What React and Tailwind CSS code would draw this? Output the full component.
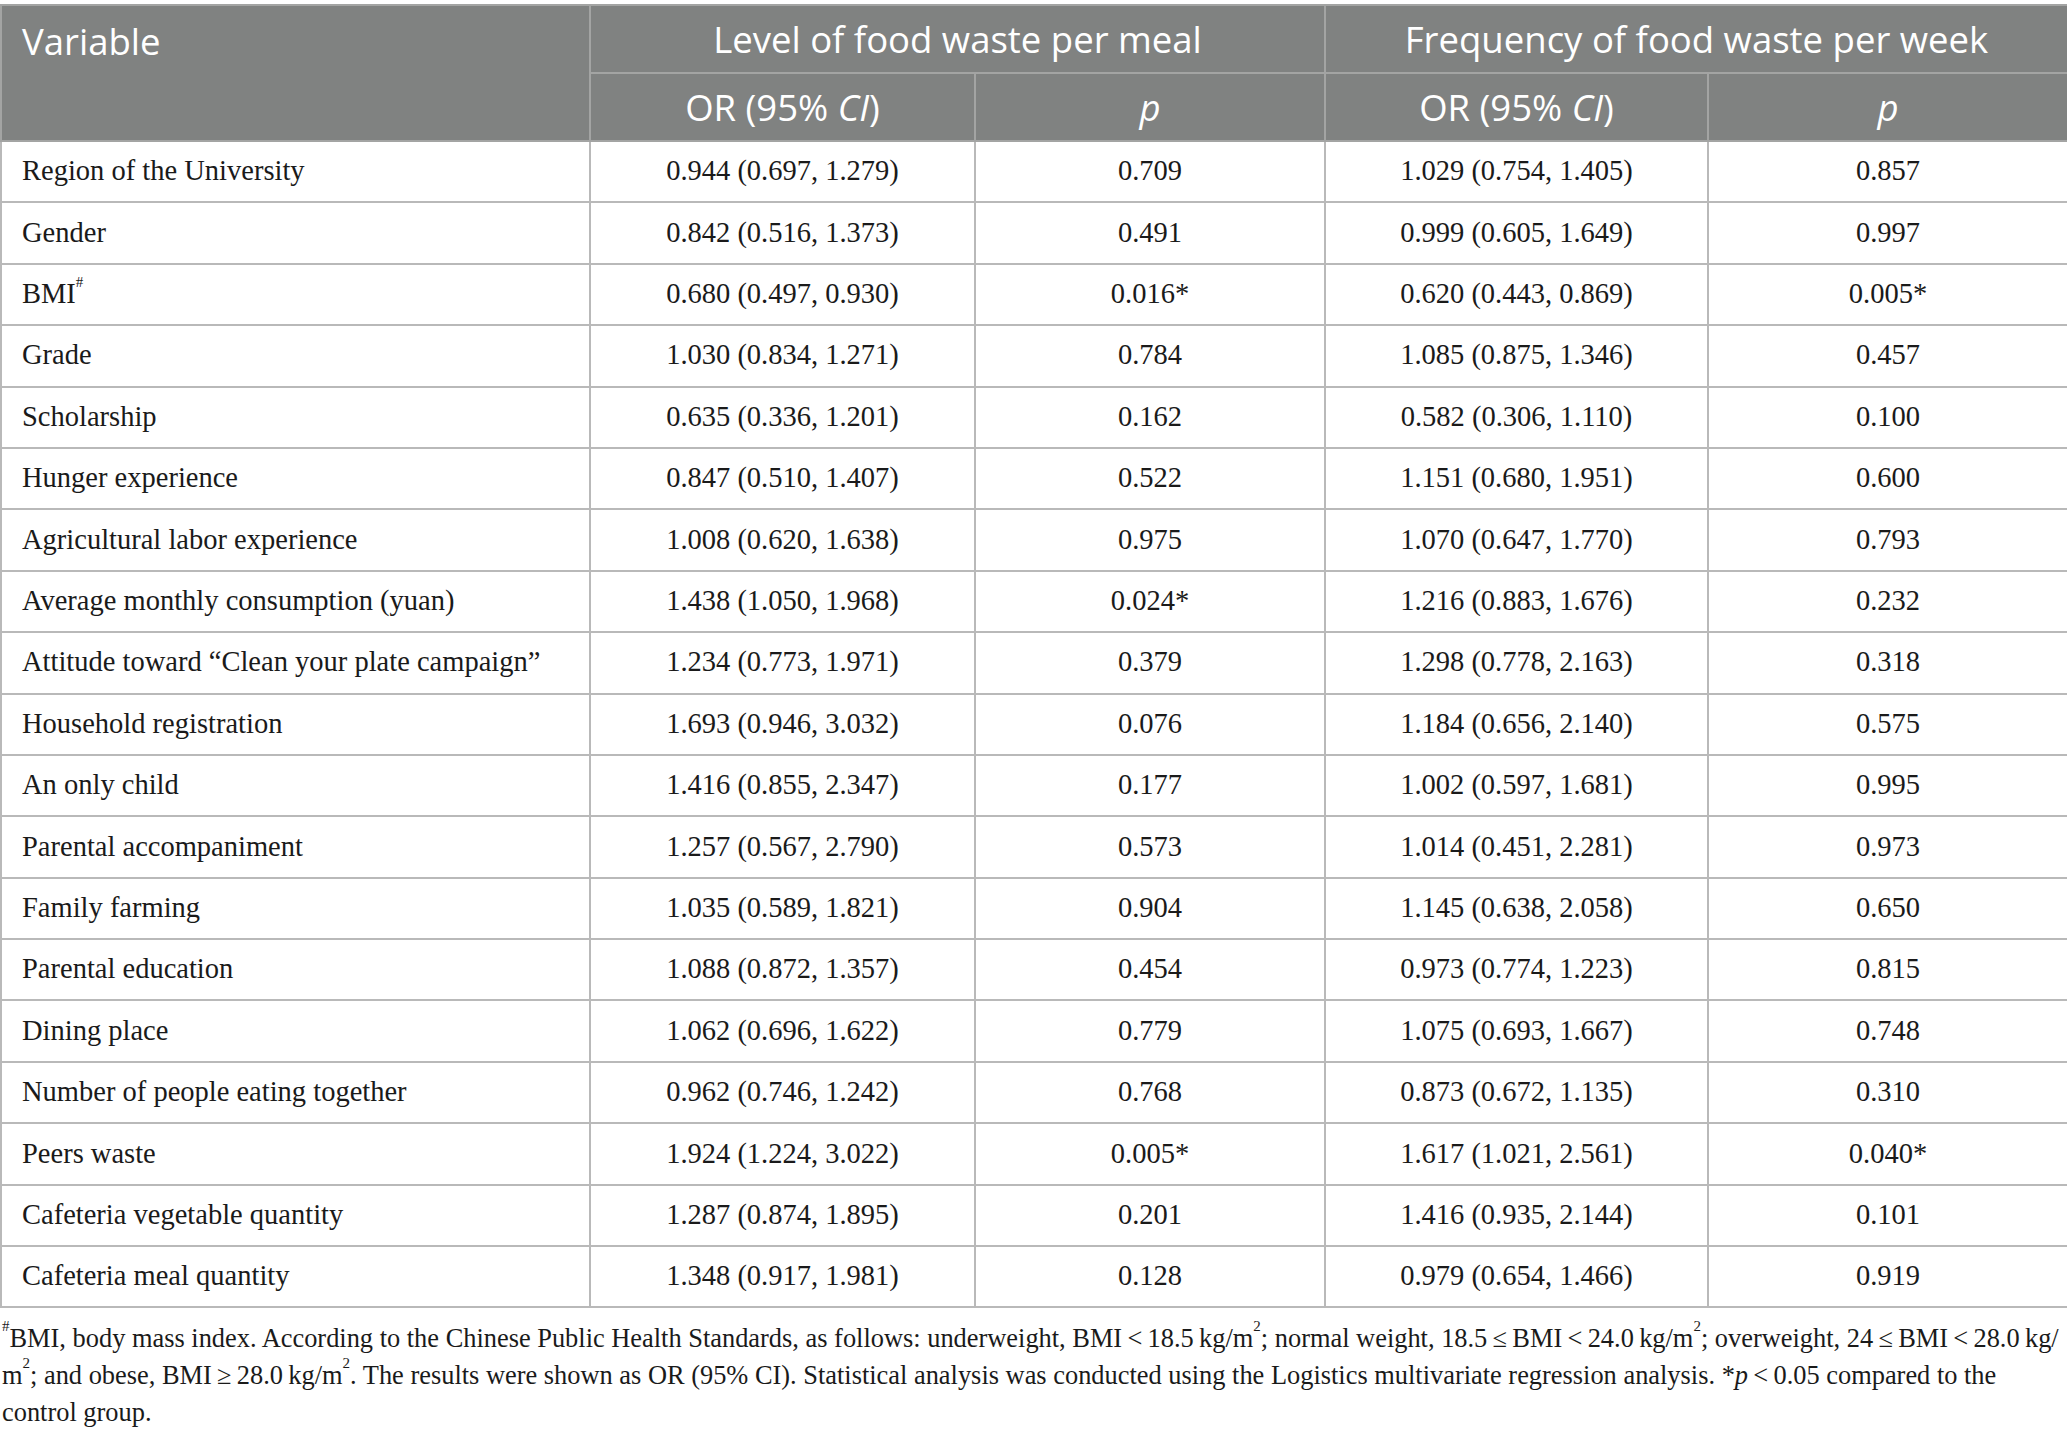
import React from 'react';

const rows = [
  ['Region of the University', '0.944 (0.697, 1.279)', '0.709', '1.029 (0.754, 1.405)', '0.857'],
  ['Gender', '0.842 (0.516, 1.373)', '0.491', '0.999 (0.605, 1.649)', '0.997'],
  ['BMI#', '0.680 (0.497, 0.930)', '0.016*', '0.620 (0.443, 0.869)', '0.005*'],
  ['Grade', '1.030 (0.834, 1.271)', '0.784', '1.085 (0.875, 1.346)', '0.457'],
  ['Scholarship', '0.635 (0.336, 1.201)', '0.162', '0.582 (0.306, 1.110)', '0.100'],
  ['Hunger experience', '0.847 (0.510, 1.407)', '0.522', '1.151 (0.680, 1.951)', '0.600'],
  ['Agricultural labor experience', '1.008 (0.620, 1.638)', '0.975', '1.070 (0.647, 1.770)', '0.793'],
  ['Average monthly consumption (yuan)', '1.438 (1.050, 1.968)', '0.024*', '1.216 (0.883, 1.676)', '0.232'],
  ['Attitude toward \u201cClean your plate campaign\u201d', '1.234 (0.773, 1.971)', '0.379', '1.298 (0.778, 2.163)', '0.318'],
  ['Household registration', '1.693 (0.946, 3.032)', '0.076', '1.184 (0.656, 2.140)', '0.575'],
  ['An only child', '1.416 (0.855, 2.347)', '0.177', '1.002 (0.597, 1.681)', '0.995'],
  ['Parental accompaniment', '1.257 (0.567, 2.790)', '0.573', '1.014 (0.451, 2.281)', '0.973'],
  ['Family farming', '1.035 (0.589, 1.821)', '0.904', '1.145 (0.638, 2.058)', '0.650'],
  ['Parental education', '1.088 (0.872, 1.357)', '0.454', '0.973 (0.774, 1.223)', '0.815'],
  ['Dining place', '1.062 (0.696, 1.622)', '0.779', '1.075 (0.693, 1.667)', '0.748'],
  ['Number of people eating together', '0.962 (0.746, 1.242)', '0.768', '0.873 (0.672, 1.135)', '0.310'],
  ['Peers waste', '1.924 (1.224, 3.022)', '0.005*', '1.617 (1.021, 2.561)', '0.040*'],
  ['Cafeteria vegetable quantity', '1.287 (0.874, 1.895)', '0.201', '1.416 (0.935, 2.144)', '0.101'],
  ['Cafeteria meal quantity', '1.348 (0.917, 1.981)', '0.128', '0.979 (0.654, 1.466)', '0.919'],
];

function Sup({ children }) {
  return <sup className="text-[15px] leading-none align-[9px]">{children}</sup>;
}

function Label({ text }) {
  // the BMI row carries a superscript marker
  if (text.endsWith('#')) {
    return (
      <>
        {text.slice(0, -1)}
        <Sup>#</Sup>
      </>
    );
  }
  return text;
}

export default function App() {
  const head = "font-['Open_Sans',sans-serif] text-[36.5px] font-normal text-white border-2 border-[#a3a4a3]";
  const cell = 'border-2 border-[#b9b9b9] h-[61.4px]';

  return (
    <div className="w-[2067px] bg-white pt-[4px] font-['Liberation_Serif',serif] text-[#1a1a1a]">
      <table className="w-full table-fixed border-collapse">
        <colgroup>
          <col className="w-[589px]" />
          <col className="w-[385px]" />
          <col className="w-[350px]" />
          <col className="w-[383px]" />
          <col className="w-[360px]" />
        </colgroup>
        <thead className="bg-[#808281]">
          <tr className="h-[68px]">
            <th rowSpan={2} className={`${head} text-left align-top pl-[20px] pt-[8px]`}>
              Variable
            </th>
            <th colSpan={2} className={`${head} text-center`}>
              Level of food waste per meal
            </th>
            <th colSpan={2} className={`${head} text-center`}>
              Frequency of food waste per week
            </th>
          </tr>
          <tr className="h-[68px]">
            <th className={`${head} text-center`}>
              OR (95% <i>CI</i>)
            </th>
            <th className={`${head} text-center`}>
              <i>p</i>
            </th>
            <th className={`${head} text-center`}>
              OR (95% <i>CI</i>)
            </th>
            <th className={`${head} text-center`}>
              <i>p</i>
            </th>
          </tr>
        </thead>
        <tbody className="text-[28.5px]">
          {rows.map((r) => (
            <tr key={r[0]}>
              <td className={`${cell} text-left pl-[20px]`}>
                <Label text={r[0]} />
              </td>
              <td className={`${cell} text-center`}>{r[1]}</td>
              <td className={`${cell} text-center`}>{r[2]}</td>
              <td className={`${cell} text-center`}>{r[3]}</td>
              <td className={`${cell} text-center`}>{r[4]}</td>
            </tr>
          ))}
        </tbody>
      </table>

      <p className="mt-[12px] px-[2px] text-[26.4px] leading-[37px] whitespace-nowrap">
        <Sup>#</Sup>BMI, body mass index. According to the Chinese Public Health Standards, as follows: underweight,
        BMI&#8201;&lt;&#8201;18.5&#8201;kg/m<Sup>2</Sup>; normal weight, 18.5&#8201;≤&#8201;BMI&#8201;&lt;&#8201;24.0&#8201;kg/m
        <Sup>2</Sup>; overweight, 24&#8201;≤&#8201;BMI&#8201;&lt;&#8201;28.0&#8201;kg/
        <br />
        m<Sup>2</Sup>; and obese, BMI&#8201;≥&#8201;28.0&#8201;kg/m<Sup>2</Sup>. The results were shown as OR (95% CI).
        Statistical analysis was conducted using the Logistics multivariate regression analysis. *<i>p</i>
        &#8201;&lt;&#8201;0.05 compared to the
        <br />
        control group.
      </p>
    </div>
  );
}
